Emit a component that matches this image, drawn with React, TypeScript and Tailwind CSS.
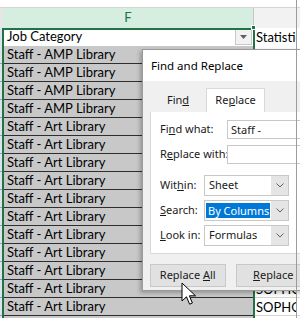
import React from 'react';

const rows = [
  ...Array(4).fill('Staff - AMP Library'),
  ...Array(12).fill('Staff - Art Library'),
];

const Key = ({ children }: { children: React.ReactNode }) => <span className="underline">{children}</span>;

function SelectBox({ value, highlight }: { value: string; highlight?: boolean }) {
  return (
    <div className="flex h-[21px] w-[85px] border border-[#c8c8c8] bg-white">
      <div className="flex flex-1 items-center pl-[1px]">
        {highlight ? (
          <span className="w-[64px] whitespace-nowrap bg-[#0078d7] px-[2px] leading-[15px] text-white">{value}</span>
        ) : (
          <span className="whitespace-nowrap px-[3px]">{value}</span>
        )}
      </div>
      <div className="flex w-[17px] items-center justify-center bg-[#e5e5e5]">
        <svg width="8" height="5" viewBox="0 0 8 5">
          <path d="M0.5 0.5 L4 4 L7.5 0.5" fill="none" stroke="#606060" strokeWidth="1" />
        </svg>
      </div>
    </div>
  );
}

function FindReplaceDialog() {
  return (
    <div
      className="absolute left-[142px] top-[49px] h-[242px] w-[170px] whitespace-nowrap border border-[#9a9a9a] bg-[#f0f0f0] text-[11px] text-[#1a1a1a] shadow-[-2px_2px_4px_rgba(0,0,0,0.25)]"
      style={{ fontFamily: '"Noto Sans", "Open Sans", sans-serif' }}
    >
      <div className="flex h-[31px] items-center bg-white pl-[8px] text-[11.5px] text-black">Find and Replace</div>
      <div className="h-[7px]" />
      <div className="flex h-[24px] pl-[7px]">
        <div className="flex w-[56px] items-center justify-center">
          Fin<Key>d</Key>
        </div>
        <div className="flex w-[59px] items-center justify-center border border-b-0 border-[#d9d9d9] bg-white">
          Re<Key>p</Key>lace
        </div>
      </div>
      <div className="ml-[7px] h-[142px] border border-t-0 border-[#d9d9d9] bg-white pl-[9px] pt-[8px]">
        <div className="flex h-[19px] items-center">
          <span className="w-[67px]">Fi<Key>n</Key>d what:</span>
          <div className="h-[19px] flex-1 border border-[#c8c8c8] pl-[3px] leading-[17px]">Staff -</div>
        </div>
        <div className="mt-[6px] flex h-[19px] items-center">
          <span className="w-[67px]">R<Key>e</Key>place with:</span>
          <div className="h-[19px] flex-1 border border-[#c8c8c8]" />
        </div>
        <div className="mt-[11px] flex items-center">
          <span className="w-[44px]">Wit<Key>h</Key>in:</span>
          <SelectBox value="Sheet" />
        </div>
        <div className="mt-[4px] flex items-center">
          <span className="w-[44px]"><Key>S</Key>earch:</span>
          <SelectBox value="By Columns" highlight />
        </div>
        <div className="mt-[4px] flex items-center">
          <span className="w-[44px]"><Key>L</Key>ook in:</span>
          <SelectBox value="Formulas" />
        </div>
      </div>
      <div className="mt-[10px] flex gap-[10px] pl-[7px]">
        <div className="flex h-[23px] w-[79px] items-center justify-center border border-[#c8c8c8] bg-[#e1e1e1]">
          Replace&nbsp;<Key>A</Key>ll
        </div>
        <div className="flex h-[23px] w-[79px] items-center justify-center border border-[#c8c8c8] bg-[#e1e1e1]">
          <Key>R</Key>eplace
        </div>
      </div>
    </div>
  );
}

export default function App() {
  return (
    <div
      className="relative h-[318px] w-[300px] overflow-hidden bg-white text-black"
      style={{ fontFamily: 'Lato, "Liberation Sans", sans-serif' }}
    >
      <div className="h-[8px] border-b border-[#d4d4d4]" />
      {/* column headers */}
      <div className="flex h-[20px]">
        <div className="w-[3px] bg-[#e6e6e6]" />
        <div className="flex w-[250px] items-center justify-center bg-[#d6eedf] text-[13px] text-[#217346]">F</div>
        <div className="w-[43px] border-l border-[#c6c6c6] bg-[#f2f2f2]" />
        <div className="flex-1 bg-[#f2f2f2]" />
      </div>
      {/* header row */}
      <div className="flex h-[18px] text-[13px]">
        <div className="w-[3px] bg-[#dde3ec]" />
        <div className="flex w-[250px] items-center justify-between bg-white pl-[4px]">
          <span>Job Category</span>
          <div className="mr-[1px] flex h-[16px] w-[17px] items-center justify-center border border-[#c8c8c8] bg-[#f2f2f2]">
            <svg width="7" height="4" viewBox="0 0 7 4">
              <path d="M0 0 L7 0 L3.5 4 Z" fill="#606060" />
            </svg>
          </div>
        </div>
        <div className="w-[43px] overflow-hidden whitespace-nowrap pl-[3px] leading-[18px]">Statistic</div>
        <div className="flex-1" />
      </div>
      {rows.map((r, i) => (
        <div key={i} className="flex h-[18px] text-[13px]">
          <div className="w-[3px] border-b border-[#8aa3c4] bg-[#dde3ec]" />
          <div className="flex w-[250px] items-center border-b border-[#2e2e2e] bg-[#c8c8c8] pl-[4px]">{r}</div>
          <div className="w-[43px] overflow-hidden whitespace-nowrap border-b border-[#d4d4d4] pl-[3px] leading-[18px]">
            {i < 2 ? 'JUNIOR' : 'SOPHOMORE'}
          </div>
          <div className="flex-1 border-b border-[#d4d4d4]" />
        </div>
      ))}

      {/* selection outline */}
      <div className="pointer-events-none absolute left-[2px] top-[28px] h-[300px] w-[253px] border-2 border-[#217346]" />
      <div className="absolute left-[251px] top-[25px] h-[5px] w-[5px] border border-white bg-[#217346]" />

      <FindReplaceDialog />

      {/* frame line */}
      <div className="absolute left-[296px] top-0 h-[318px] w-px bg-[#9c9c9c]" />

      {/* mouse cursor */}
      <svg className="absolute left-[181px] top-[282px]" width="16" height="26" viewBox="0 0 16 26">
        <path
          d="M1 1 L1 19 L5.5 14.8 L8.6 22.2 L11.4 21 L8.4 13.8 L14.5 13.8 Z"
          fill="white"
          stroke="black"
          strokeWidth="1"
          strokeLinejoin="round"
        />
      </svg>
    </div>
  );
}
